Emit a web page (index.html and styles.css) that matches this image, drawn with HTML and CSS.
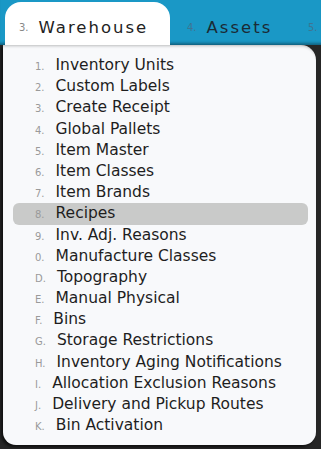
FILE: index.html
```html
<!DOCTYPE html>
<html lang="en">
<head>
<meta charset="UTF-8"/>
<meta name="viewport" content="width=device-width, initial-scale=1.0"/>
<title>Warehouse Menu</title>
<link rel="stylesheet" href="styles.css">
</head>
<body>
  <div class="tabbar">
    <div class="tab active"><span class="num">3.</span>Warehouse</div>
    <div class="tab"><span class="num">4.</span>Assets</div>
    <div class="tab"><span class="num">5.</span></div>
  </div>

  <ul class="menu">
    <li><span class="num">1.</span>Inventory Units</li>
    <li><span class="num">2.</span>Custom Labels</li>
    <li><span class="num">3.</span>Create Receipt</li>
    <li><span class="num">4.</span>Global Pallets</li>
    <li><span class="num">5.</span>Item Master</li>
    <li><span class="num">6.</span>Item Classes</li>
    <li><span class="num">7.</span>Item Brands</li>
    <li class="sel"><span class="num">8.</span>Recipes</li>
    <li><span class="num">9.</span>Inv. Adj. Reasons</li>
    <li><span class="num">0.</span>Manufacture Classes</li>
    <li><span class="num">D.</span>Topography</li>
    <li><span class="num">E.</span>Manual Physical</li>
    <li><span class="num">F.</span>Bins</li>
    <li><span class="num">G.</span>Storage Restrictions</li>
    <li><span class="num">H.</span>Inventory Aging Notifications</li>
    <li><span class="num">I.</span>Allocation Exclusion Reasons</li>
    <li><span class="num">J.</span>Delivery and Pickup Routes</li>
    <li><span class="num">K.</span>Bin Activation</li>
  </ul>
</body>
</html>
```

FILE: styles.css
```css
body { margin: 0; background: #262626; font-family: "DejaVu Sans", sans-serif; height: 449px; overflow: hidden; }
.tabbar { background: #1a98c6; height: 45px; display: flex; align-items: flex-end; padding-left: 5px; overflow: hidden; box-shadow: inset 0 -4px 3px -2px rgba(0,0,0,.35); }
.tab { flex: none; height: 43px; box-sizing: border-box; padding: 7px 0 0 14px; display: flex; align-items: center; font-size: 16.5px; letter-spacing: 2px; color: #1b2b35; white-space: nowrap; }
.tab.active { background: #fff; width: 165px; border-radius: 16px 16px 0 0; color: #222; }
.tab + .tab { margin-left: 3px; }
.tab:nth-child(2) { width: 118px; }
.tab .num { font-size: 10px; letter-spacing: 0; margin-right: 10px; color: #3d7592; }
.tab.active .num { color: #888; }
.menu { list-style: none; margin: 0 5px 0 3px; padding: 10px 0 9px; background: #f8f9fb; border-radius: 0 15px 13px 13px; box-shadow: -2px 2px 3px rgba(0,0,0,.6), inset 0 3px 3px -2px rgba(0,0,0,.25); }
.menu li { height: 21.2px; line-height: 21.2px; margin: 0 8px 0 10px; padding-left: 22px; font-size: 15.5px; color: #1e1e1e; border-radius: 6px; white-space: nowrap; }
.menu li.sel { background: #c9cac9; }
.menu .num { font-size: 10px; color: #9a9a9a; margin-right: 11px; }
```
